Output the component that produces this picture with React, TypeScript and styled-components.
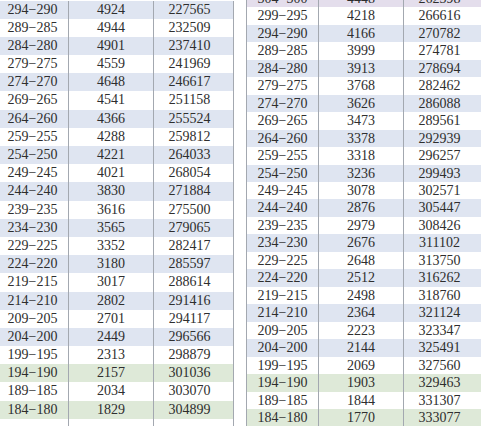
import React from 'react';
import styled, { createGlobalStyle } from 'styled-components';

const GlobalStyle = createGlobalStyle`
  html, body {
    margin: 0;
    padding: 0;
    background: #ffffff;
  }
  body {
    font-family: 'Liberation Serif', 'Times New Roman', serif;
    color: #2e2e2e;
  }
`;

type Tone = 'white' | 'blue' | 'green' | 'purple';

type Row = {
  range: string;
  count: number;
  total: number;
  tone: Tone;
};

const tones: Record<Tone, string> = {
  white: '#ffffff',
  blue: '#dfe5f1',
  green: '#dee9d8',
  purple: '#e4deec',
};

const Page = styled.div`
  display: flex;
  align-items: flex-start;
  gap: 12px;
  width: 481px;
  height: 426px;
  overflow: hidden;
`;

const Table = styled.div<{ $offsetX: number; $offsetY: number; $right?: boolean }>`
  display: flex;
  flex-direction: column;
  flex: 0 0 auto;
  width: 236px;
  height: ${(p) => 426 - p.$offsetY}px;
  margin-left: ${(p) => p.$offsetX}px;
  margin-top: ${(p) => p.$offsetY}px;
  ${(p) =>
    p.$right
      ? 'border-left: 1px solid #a3a8b0;'
      : 'border-right: 1px solid #a3a8b0;'}
`;

const RowLine = styled.div<{ $tone: Tone; $height: number }>`
  display: grid;
  grid-template-columns: 71px 85px 1fr;
  flex: 0 0 auto;
  height: ${(p) => p.$height}px;
  background: ${(p) => tones[p.$tone]};
`;

const Filler = styled.div`
  display: grid;
  grid-template-columns: 71px 85px 1fr;
  flex: 1 1 auto;
`;

const Cell = styled.div<{ $divider?: boolean; $shift?: number; $height: number }>`
  display: flex;
  align-items: center;
  justify-content: center;
  padding-right: ${(p) => p.$shift ?? 0}px;
  font-size: 14px;
  line-height: ${(p) => p.$height}px;
  white-space: nowrap;
  ${(p) => (p.$divider ? 'border-left: 1px solid #a3a8b0;' : '')}
`;

const EmptyCell = styled.div<{ $divider?: boolean }>`
  ${(p) => (p.$divider ? 'border-left: 1px solid #a3a8b0;' : '')}
`;

const rng = (hi: number) => `${hi}\u2212${hi - 4}`;

const build = (
  start: number,
  counts: number[],
  totals: number[],
  toneAt: (hi: number, i: number) => Tone
): Row[] =>
  counts.map((count, i) => {
    const hi = start - i * 5;
    return { range: rng(hi), count, total: totals[i], tone: toneAt(hi, i) };
  });

const leftRows = build(
  294,
  [4924, 4944, 4901, 4559, 4648, 4541, 4366, 4288, 4221, 4021, 3830, 3616, 3565, 3352, 3180, 3017, 2802, 2701, 2449, 2313, 2157, 2034, 1829],
  [227565, 232509, 237410, 241969, 246617, 251158, 255524, 259812, 264033, 268054, 271884, 275500, 279065, 282417, 285597, 288614, 291416, 294117, 296566, 298879, 301036, 303070, 304899],
  (hi, i) => (hi === 194 || hi === 184 ? 'green' : i % 2 === 0 ? 'blue' : 'white')
);

const rightRows = build(
  304,
  [4448, 4218, 4166, 3999, 3913, 3768, 3626, 3473, 3378, 3318, 3236, 3078, 2876, 2979, 2676, 2648, 2512, 2498, 2364, 2223, 2144, 2069, 1903, 1844, 1770],
  [262398, 266616, 270782, 274781, 278694, 282462, 286088, 289561, 292939, 296257, 299493, 302571, 305447, 308426, 311102, 313750, 316262, 318760, 321124, 323347, 325491, 327560, 329463, 331307, 333077],
  (hi, i) =>
    i === 0 ? 'purple' : hi === 194 || hi === 184 ? 'green' : i % 2 === 0 ? 'blue' : 'white'
);

type AgeTableProps = {
  rows: Row[];
  rowHeight: number;
  offsetX: number;
  offsetY: number;
  right?: boolean;
};

const AgeTable: React.FC<AgeTableProps> = ({ rows, rowHeight, offsetX, offsetY, right }) => (
  <Table $offsetX={offsetX} $offsetY={offsetY} $right={right}>
    {rows.map((row) => (
      <RowLine key={row.range} $tone={row.tone} $height={rowHeight}>
        <Cell $height={rowHeight}>{row.range}</Cell>
        <Cell $height={rowHeight} $divider>
          {row.count}
        </Cell>
        <Cell $height={rowHeight} $divider $shift={8}>
          {row.total}
        </Cell>
      </RowLine>
    ))}
    <Filler>
      <EmptyCell />
      <EmptyCell $divider />
      <EmptyCell $divider />
    </Filler>
  </Table>
);

const App: React.FC = () => (
  <>
    <GlobalStyle />
    <Page>
      <AgeTable rows={leftRows} rowHeight={18.2} offsetX={-3} offsetY={0.5} />
      <AgeTable rows={rightRows} rowHeight={17.48} offsetX={0} offsetY={-10.2} right />
    </Page>
  </>
);

export default App;
